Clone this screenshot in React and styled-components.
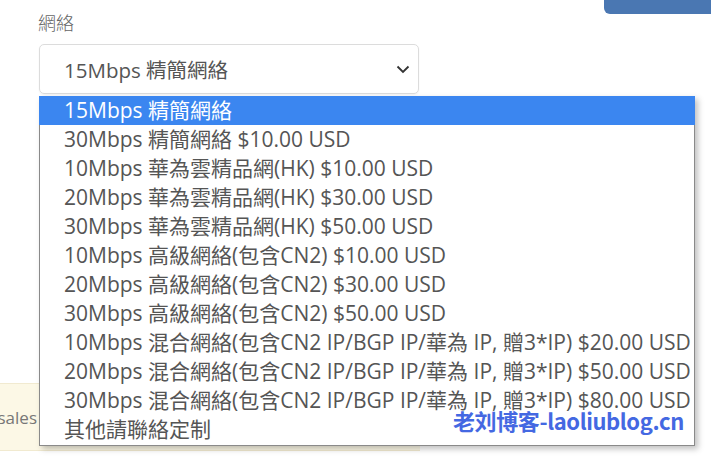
import React from 'react';
import styled, { createGlobalStyle } from 'styled-components';

const GlobalStyle = createGlobalStyle`
  html, body {
    margin: 0;
    padding: 0;
    background: #fff;
    overflow: hidden;
  }
  body {
    font-family: "Open Sans", "Noto Sans CJK TC", sans-serif;
  }
`;

const Page = styled.div`
  position: relative;
  width: 711px;
  height: 456px;
  overflow: hidden;
`;

const TopButton = styled.div`
  position: absolute;
  top: 0;
  right: 0;
  width: 107px;
  height: 14px;
  background: #4a77b2;
  border-bottom-left-radius: 6px;
`;

const Field = styled.div`
  padding: 10px 0 0 38px;
`;

const Label = styled.div`
  font-size: 18px;
  font-weight: 300;
  color: #666;
  line-height: 26px;
`;

const SelectBox = styled.div`
  margin-top: 8px;
  margin-left: 1px;
  width: 380px;
  height: 50px;
  box-sizing: border-box;
  border: 1px solid #dcdcdc;
  border-radius: 5px;
  display: flex;
  align-items: center;
  justify-content: space-between;
  padding: 0 8px 0 24px;
  font-size: 20.5px;
  color: #555;
  box-shadow: 0 1px 2px rgba(0, 0, 0, 0.05);
`;

const Alert = styled.div`
  margin-top: 289px;
  width: 420px;
  height: 68px;
  box-sizing: border-box;
  background: #fcf8e6;
  border-top: 1px solid #f1ead0;
  border-bottom: 1px solid #f1ead0;
  display: flex;
  align-items: center;
  justify-content: flex-end;
  padding-right: 383px;
  font-size: 17px;
  color: #777;
`;

const List = styled.ul`
  position: absolute;
  left: 39px;
  top: 96px;
  width: 656px;
  margin: 0;
  padding: 0 0 1px;
  list-style: none;
  background: #fff;
  box-sizing: border-box;
  border: 1px solid #8a8a8a;
  border-top: none;
  box-shadow: 3px 3px 6px rgba(0, 0, 0, 0.25);
`;

const Option = styled.li`
  height: 29px;
  line-height: 29px;
  font-size: 21px;
  white-space: nowrap;
  color: ${p => (p.$active ? '#fff' : '#555')};
  background: ${p => (p.$active ? '#3b86f0' : 'transparent')};
  margin: ${p => (p.$active ? '0 -1px' : '0')};
  padding-left: ${p => (p.$active ? '25px' : '24px')};
`;

const Watermark = styled.div`
  position: absolute;
  left: 453px;
  top: 404px;
  font-family: "Noto Sans CJK SC", sans-serif;
  font-weight: 700;
  font-size: 22px;
  letter-spacing: -0.4px;
  color: #4468e2;
  white-space: nowrap;
`;

const options = [
  '15Mbps 精簡網絡',
  '30Mbps 精簡網絡 $10.00 USD',
  '10Mbps 華為雲精品網(HK) $10.00 USD',
  '20Mbps 華為雲精品網(HK) $30.00 USD',
  '30Mbps 華為雲精品網(HK) $50.00 USD',
  '10Mbps 高級網絡(包含CN2) $10.00 USD',
  '20Mbps 高級網絡(包含CN2) $30.00 USD',
  '30Mbps 高級網絡(包含CN2) $50.00 USD',
  '10Mbps 混合網絡(包含CN2 IP/BGP IP/華為 IP, 贈3*IP) $20.00 USD',
  '20Mbps 混合網絡(包含CN2 IP/BGP IP/華為 IP, 贈3*IP) $50.00 USD',
  '30Mbps 混合網絡(包含CN2 IP/BGP IP/華為 IP, 贈3*IP) $80.00 USD',
  '其他請聯絡定制',
];

const Chevron = () => (
  <svg width="14" height="9" viewBox="0 0 14 9">
    <path d="M1.5 1.5 L7 7 L12.5 1.5" fill="none" stroke="#333" strokeWidth="1.8" />
  </svg>
);

export default function App() {
  return (
    <Page>
      <GlobalStyle />
      <TopButton />
      <Field>
        <Label>網絡</Label>
        <SelectBox>
          <span>15Mbps 精簡網絡</span>
          <Chevron />
        </SelectBox>
      </Field>
      <Alert>sales</Alert>
      <List>
        {options.map((o, i) => (
          <Option key={o} $active={i === 0}>{o}</Option>
        ))}
      </List>
      <Watermark>老刘博客-laoliublog.cn</Watermark>
    </Page>
  );
}
